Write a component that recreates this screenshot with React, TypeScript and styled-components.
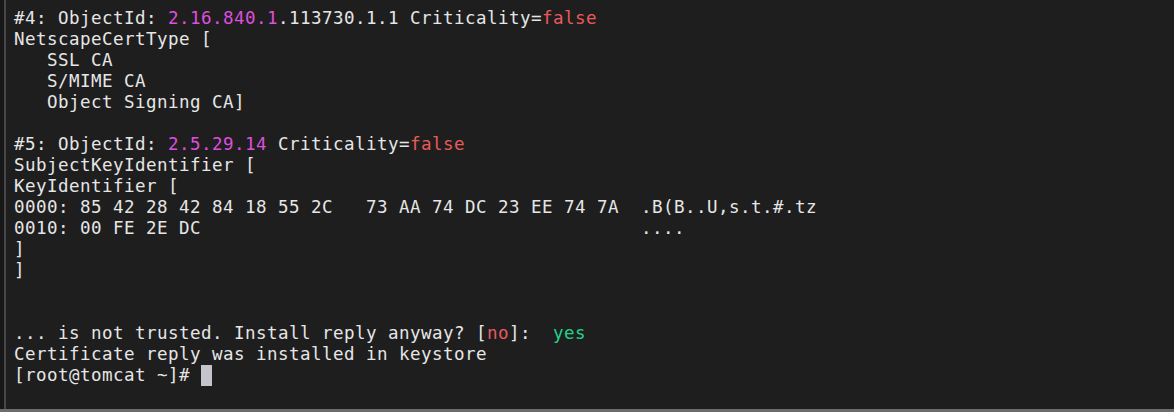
import React from "react";
import styled, { createGlobalStyle } from "styled-components";

const Global = createGlobalStyle`
  html, body { margin: 0; padding: 0; background: #1e1e1e; }
  #root { width: 1174px; height: 412px; }
`;

const Frame = styled.div`
  display: flex;
  width: 1174px;
  height: 412px;
  box-sizing: border-box;
  background: #171717;
  padding-left: 4px;
  border-bottom: 3px solid #6c6c6c;
`;

const Terminal = styled.div`
  flex: 1;
  display: flex;
  flex-direction: column;
  background: #1e1e1e;
  border-left: 2px solid #474747;
  padding: 8px 0 0 8px;
  font-family: "DejaVu Sans Mono", "Liberation Mono", monospace;
  font-size: 17.5px;
  letter-spacing: 0.465px;
  line-height: 21px;
  color: #e6e6e6;
`;

const Line = styled.div`
  white-space: pre;
  height: 21px;
`;

const Tone = styled.span<{ $c: "magenta" | "red" | "green" }>`
  color: ${(p) =>
    p.$c === "magenta" ? "#df4fde" : p.$c === "red" ? "#e85b5b" : "#22d38b"};
`;

const Cursor = styled.span`
  display: inline-block;
  width: 11px;
  height: 21px;
  vertical-align: -5px;
  background: #c4c4cc;
`;

export default function App() {
  return (
    <>
      <Global />
      <Frame>
        <Terminal>
          <Line>
            {"#4: ObjectId: "}
            <Tone $c="magenta">2.16.840.1</Tone>
            {".113730.1.1 Criticality="}
            <Tone $c="red">false</Tone>
          </Line>
          <Line>{"NetscapeCertType ["}</Line>
          <Line>{"   SSL CA"}</Line>
          <Line>{"   S/MIME CA"}</Line>
          <Line>{"   Object Signing CA]"}</Line>
          <Line />
          <Line>
            {"#5: ObjectId: "}
            <Tone $c="magenta">2.5.29.14</Tone>
            {" Criticality="}
            <Tone $c="red">false</Tone>
          </Line>
          <Line>{"SubjectKeyIdentifier ["}</Line>
          <Line>{"KeyIdentifier ["}</Line>
          <Line>
            {"0000: 85 42 28 42 84 18 55 2C   73 AA 74 DC 23 EE 74 7A  .B(B..U,s.t.#.tz"}
          </Line>
          <Line>
            {"0010: 00 FE 2E DC                                        ...."}
          </Line>
          <Line>{"]"}</Line>
          <Line>{"]"}</Line>
          <Line />
          <Line />
          <Line>
            {"... is not trusted. Install reply anyway? ["}
            <Tone $c="red">no</Tone>
            {"]:  "}
            <Tone $c="green">yes</Tone>
          </Line>
          <Line>{"Certificate reply was installed in keystore"}</Line>
          <Line>
            {"[root@tomcat ~]# "}
            <Cursor />
          </Line>
        </Terminal>
      </Frame>
    </>
  );
}
